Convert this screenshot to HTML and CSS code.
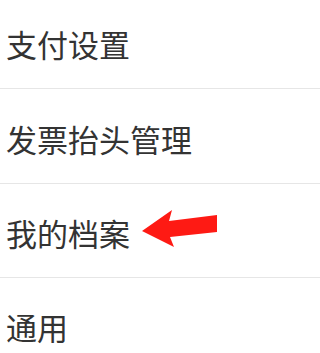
FILE: index.html
```html
<!DOCTYPE html>
<html lang="zh">
<head>
<meta charset="utf-8">
<link rel="stylesheet" href="styles.css">
</head>
<body>
<div class="list">
  <div class="row">支付设置</div>
  <div class="row">发票抬头管理</div>
  <div class="row">我的档案</div>
  <div class="row last">通用</div>
</div>
<svg class="arrow" width="217" height="353" viewBox="0 0 217 353">
  <polygon points="142,231 172,210 169,221 217,215 217,232 170,237 174,247" fill="#fe1a14"/>
</svg>
</body>
</html>
```
FILE: styles.css
```css
html, body {
  margin: 0;
  padding: 0;
  background: #ffffff;
  overflow: hidden;
}
body {
  position: relative;
  height: 353px;
  font-family: "Noto Sans CJK SC", "Noto Sans", sans-serif;
  color: #333333;
}
.list {
  display: flex;
  flex-direction: column;
  margin-top: -5.5px;
  height: 358.5px;
  overflow: hidden;
}
.row {
  box-sizing: border-box;
  flex: 0 0 94.5px;
  display: flex;
  align-items: center;
  padding: 5px 0 0 6px;
  font-size: 31px;
  line-height: 1;
  border-bottom: 1px solid #e6e6e6;
}
.row.last {
  flex: 1 1 auto;
  align-items: flex-start;
  padding-top: 33px;
  border-bottom: none;
}
.arrow {
  position: absolute;
  left: 0;
  top: 0;
}
```
